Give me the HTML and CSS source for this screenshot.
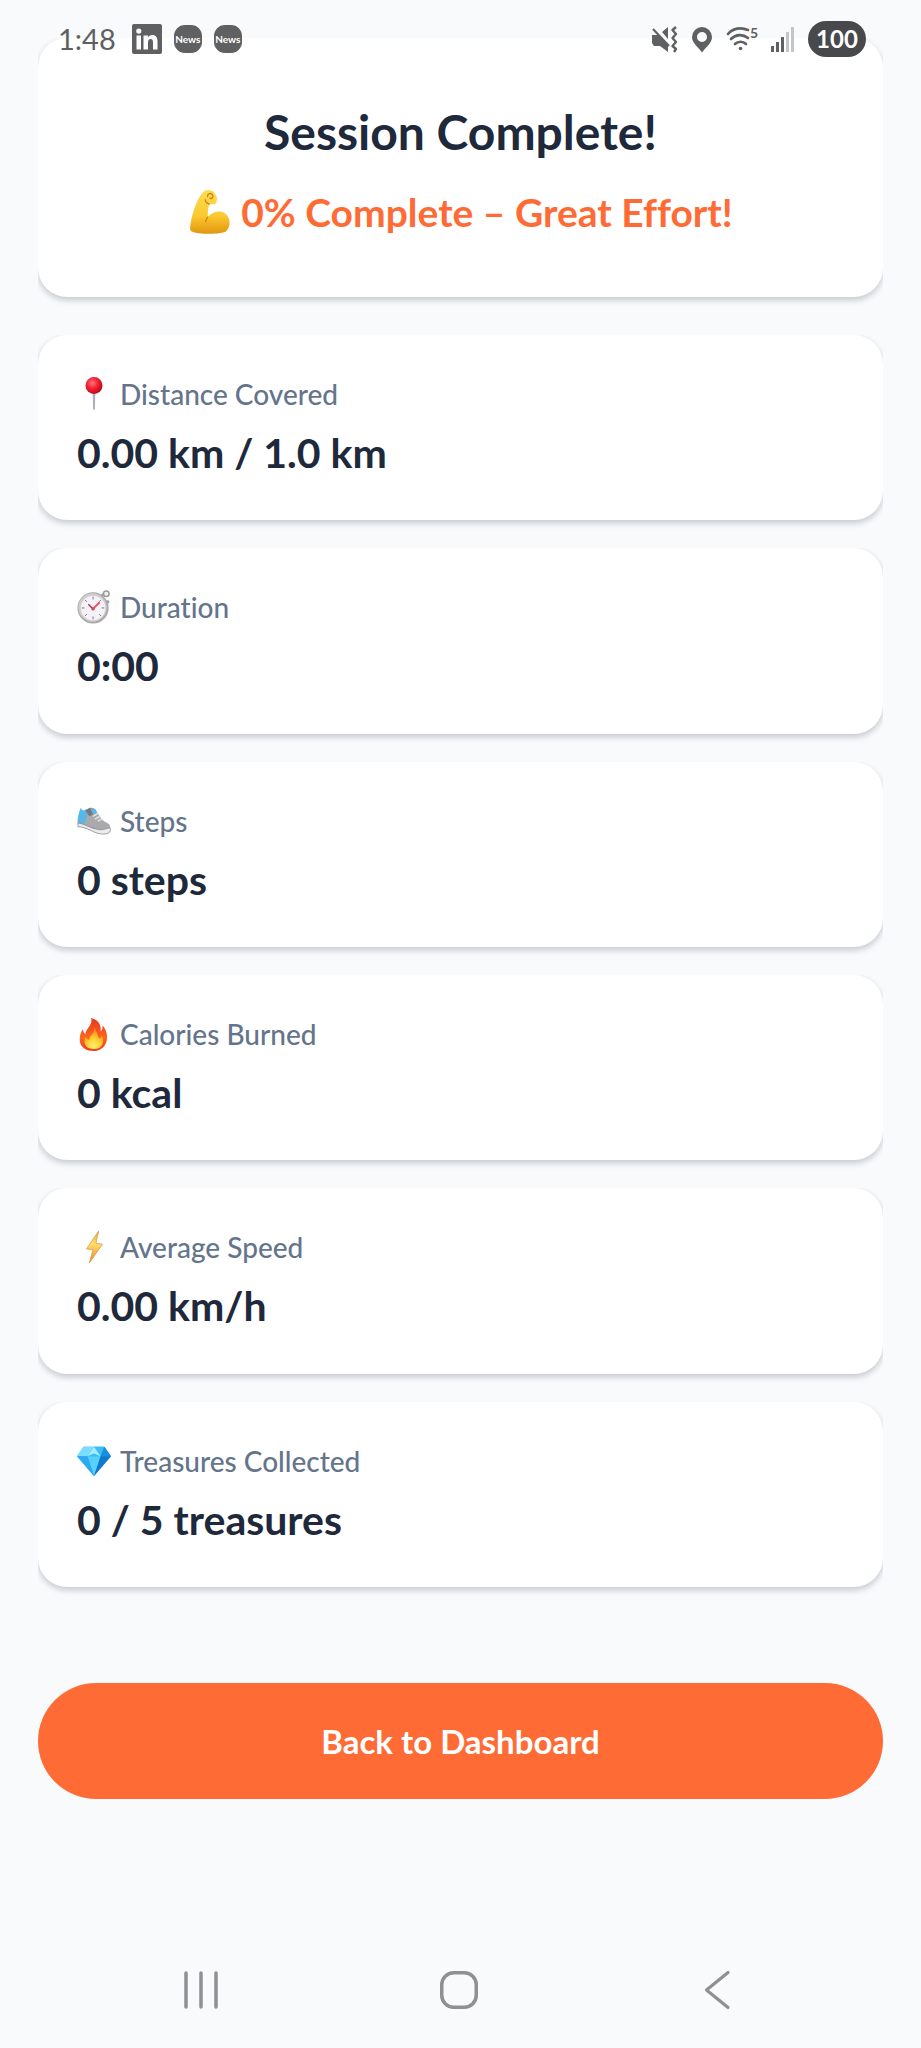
FILE: index.html
```html
<!DOCTYPE html>
<html lang="en">
<head>
<meta charset="utf-8">
<meta name="viewport" content="width=device-width, initial-scale=1">
<title>Session Complete</title>
<link rel="stylesheet" href="styles.css">
</head>
<body>
<div class="status-bar">
  <div class="status-left">
    <span class="clock">1:48</span>
    <svg class="app-icon" width="30" height="30" viewBox="0 0 30 30" role="img" aria-label="LinkedIn"><path fill="#5f6062" fill-rule="evenodd" d="M2 0h26a2 2 0 0 1 2 2v26a2 2 0 0 1-2 2H2a2 2 0 0 1-2-2V2a2 2 0 0 1 2-2zM4.500 11.500h4.500v14H4.500zM6.800 4.500a2.600 2.600 0 1 0 0 5.200 2.600 2.600 0 0 0 0-5.200zM11.500 11.500v14H16v-7c0-2 .7-3.500 2.600-3.500s2.400 1.600 2.400 3.500v7h4.500v-8c0-4-1.500-6.400-5.200-6.400-2.200 0-3.600 1-4.300 2.300v-1.900z"/></svg>
    <span class="news">News</span>
    <span class="news">News</span>
  </div>
  <div class="status-right">
    <svg width="27" height="27" viewBox="0 0 27 27" aria-hidden="true"><path fill="#5f6062" d="M1 9h7l9 9v8l-8-6H3l-2-3zM11 6l6-5v12z"/><path d="M2 3l16 17" stroke="#5f6062" stroke-width="2.200"/><path d="M25 1l-3.500 3 3.500 4-3.500 4 3.500 4-3.500 4 3.500 3-2 3" fill="none" stroke="#5f6062" stroke-width="2.400" stroke-linejoin="round"/></svg>
    <svg width="22" height="27" viewBox="0 0 22 27" aria-hidden="true"><path fill="#5f6062" fill-rule="evenodd" d="M11 1a10 10 0 0 1 10 10c0 6-6 10-10 15.500C7 21 1 17 1 11A10 10 0 0 1 11 1zm0 5a5 5 0 1 0 0 10 5 5 0 0 0 0-10z"/></svg>
    <span class="wifi"><svg width="24" height="26" viewBox="0 0 24 26" aria-hidden="true"><g fill="none" stroke="#5f6062" stroke-width="2.600" stroke-linecap="round"><path d="M2 8C7 2 15 1 22 4"/><path d="M5 13c5-5 12-5 17-1"/><path d="M9 18c3-3 8-3 11 0"/></g><circle cx="14.500" cy="22.500" r="1.800" fill="#5f6062"/></svg><span class="band">5</span></span>
    <svg width="24" height="26" viewBox="0 0 24 26" aria-hidden="true"><path fill="#5f6062" d="M0 20h3v6H0zM5 16h3v10H5zM10 11h3v15h-3z"/><path fill="#c4c5c7" d="M15 6h3v20h-3zM20 1h3v25h-3z"/></svg>
    <span class="battery">100</span>
  </div>
</div>

<main class="summary">
  <header class="card hero">
    <h1 class="title">Session Complete!</h1>
    <p class="result">
      <svg width="44" height="46" viewBox="0 0 36 36" preserveAspectRatio="none" aria-hidden="true"><defs><linearGradient id="arm" x1="0" y1="0" x2="0" y2="1"><stop offset="0" stop-color="#ffdc55"/><stop offset=".6" stop-color="#fbc82f"/><stop offset="1" stop-color="#e3950f"/></linearGradient></defs><path fill="url(#arm)" d="M13 2C15 0 20 .6 21.500 3c2 2 3 5 1.600 7.500-1.100 2-4 1.500-5.600 1.300-1 3.500-1.500 7-1.300 10.200 4-4.500 10-5.500 14-3 4.800 3 5 10.500 1.200 13.800-3 2.700-22 3-28.400.4-1.500-.6-1.500-3-1-5.200C3.500 18 8 6 13 2z"/><path d="M17.500 11.800c-2-.5-3.200-2-3.400-3.500M16 6c-.4-2 2-3.500 4-1.500 1.400 1.500-.8 4-2 2.500M16.200 22c-1 1.300-1.500 2.200-1.800 3.500" fill="none" stroke="#c98b12" stroke-width="1.100" stroke-linecap="round"/></svg>
      <span>0% Complete – Great Effort!</span>
    </p>
  </header>

  <dl class="stats">
    <div class="card stat">
      <dt class="label"><svg class="emoji" viewBox="0 0 36 36" aria-hidden="true"><defs><radialGradient id="pin" cx=".4" cy=".35" r=".65"><stop offset="0" stop-color="#ff7479"/><stop offset=".5" stop-color="#f32332"/><stop offset="1" stop-color="#bd0719"/></radialGradient></defs><path d="M16.500 16h3L19 33l-1 3-1-3z" fill="#c5c3cf"/><path d="M18 17v17" stroke="#8f8c9d" stroke-width=".8"/><circle cx="18" cy="9" r="9" fill="url(#pin)"/></svg>Distance Covered</dt>
      <dd class="value">0.00 km / 1.0 km</dd>
    </div>
    <div class="card stat">
      <dt class="label"><svg class="emoji" viewBox="0 0 36 36" aria-hidden="true"><path d="M25 7l4-3M31 12l3 1" stroke="#9a9899" stroke-width="3"/><circle cx="31" cy="4" r="3" fill="#eee" stroke="#9d9b9c" stroke-width="1.600"/><circle cx="17" cy="19" r="16.500" fill="#aaa8a8"/><circle cx="16.500" cy="18.500" r="15" fill="#d0cdcd"/><circle cx="17" cy="19" r="13" fill="#f4f2f8"/><path d="M17 7v3M17 28v3M5 19h3M26 19h3M8.500 10.500l2 2M23.500 25.500l2 2M25.500 10.500l-2 2M8.500 27.500l2-2" stroke="#77727b" stroke-width="1"/><path d="M17 20l7-7" stroke="#f04f5c" stroke-width="2"/><path d="M17 20l-5-5" stroke="#a83442" stroke-width="1.500"/><circle cx="17" cy="20" r="1.700" fill="#dc3f50"/></svg>Duration</dt>
      <dd class="value">0:00</dd>
    </div>
    <div class="card stat">
      <dt class="label"><svg class="emoji" viewBox="0 0 36 36" aria-hidden="true"><path fill="#aaa9ac" d="M3 7c2 2 5 2 7-1l3-2c3 0 6 0 7 3l6 9c3 4 9 4 9 8v6L1 23C0 18 2 12 3 7z"/><path fill="#59b6e9" d="M4 4c1 3 4 4 6 1l2 4-4 12-7-1C0 15 2 10 4 4zM15 4l5 2 2 6-5-2z"/><path fill="#77777c" d="M9 7l5-3 3 7-4 2z"/><path d="M17 13l5-3M19 16l5-3M22 18l4-2" stroke="#e5e5e8" stroke-width="1.500"/><path fill="#ececef" stroke="#85858a" stroke-width=".8" d="M1 20c8 1 13 6 21 7 5 1 9-1 13-2 1 3 0 5-2 6-6 2-13 0-18-3-5-2-9-4-14-4z"/></svg>Steps</dt>
      <dd class="value">0 steps</dd>
    </div>
    <div class="card stat">
      <dt class="label"><svg class="emoji" viewBox="0 0 36 36" aria-hidden="true"><defs><linearGradient id="flame" x1="0" y1="0" x2="0" y2="1"><stop offset="0" stop-color="#e83621"/><stop offset=".6" stop-color="#fc681d"/><stop offset="1" stop-color="#ee371d"/></linearGradient><radialGradient id="core" cx=".5" cy=".85" r=".75"><stop offset="0" stop-color="#fff36a"/><stop offset=".55" stop-color="#ffc52c"/><stop offset="1" stop-color="#ff8120"/></radialGradient></defs><path fill="url(#flame)" d="M15 1c8 2 11 8 10 14 2-1 2-3 2-6 8 8 7 26-9 27C2 36 0 23 6 13c1 3 1 4 3 5 0-6 8-9 6-17z"/><path fill="url(#core)" d="M18 11c4 5 3 9 6 12 1-1 2-2 2-4 4 7 1 15-8 15S6 28 9 21c1 2 2 3 4 3 0-5 6-6 5-13z"/></svg>Calories Burned</dt>
      <dd class="value">0 kcal</dd>
    </div>
    <div class="card stat">
      <dt class="label"><svg class="emoji" viewBox="0 0 36 36" aria-hidden="true"><defs><linearGradient id="bolt" x1="0" y1="0" x2="0" y2="1"><stop offset="0" stop-color="#f0a339"/><stop offset=".4" stop-color="#ffe06a"/><stop offset="1" stop-color="#e6812f"/></linearGradient></defs><path fill="url(#bolt)" stroke="#d99a45" stroke-width=".8" stroke-linejoin="round" d="M23 1L10 20l7 1-4 14 14-20-7-1z"/></svg>Average Speed</dt>
      <dd class="value">0.00 km/h</dd>
    </div>
    <div class="card stat">
      <dt class="label"><svg class="emoji" viewBox="0 0 36 36" aria-hidden="true"><path fill="#22a9ee" d="M7 3h22l7 10-18 21L0 13z"/><path fill="#7bdcff" d="M7 3h11l-7 10H0z"/><path fill="#3bbcf5" d="M18 3h11l-4 10H11z"/><path fill="#168fe1" d="M29 3l7 10H25z"/><path fill="#58d0ff" d="M11 13h14l-7 21z"/><path fill="#1379cf" d="M25 13h11L18 34z"/><path fill="#2caaf0" d="M0 13h11l7 21z"/><path fill="#a2edff" d="M18 3l7 10-7-3-7 3z"/></svg>Treasures Collected</dt>
      <dd class="value">0 / 5 treasures</dd>
    </div>
  </dl>

  <button class="back" type="button">Back to Dashboard</button>
</main>

<nav class="system-nav" aria-label="System">
  <button class="key" type="button" aria-label="Recent apps"><svg width="40" height="40" viewBox="0 0 40 40"><path d="M5 3v34M20 3v34M35 3v34" stroke="#8f9092" stroke-width="3.500" stroke-linecap="round"/></svg></button>
  <button class="key" type="button" aria-label="Home"><svg width="40" height="40" viewBox="0 0 40 40"><rect x="2.750" y="2.750" width="34.500" height="34.500" rx="12" fill="none" stroke="#8f9092" stroke-width="3.500"/></svg></button>
  <button class="key" type="button" aria-label="Back"><svg width="40" height="40" viewBox="0 0 40 40"><path d="M31 2.500L9.500 20 31 37.500" fill="none" stroke="#8f9092" stroke-width="3.200" stroke-linecap="round" stroke-linejoin="round"/></svg></button>
</nav>
</body>
</html>
```

FILE: styles.css
```css
* {
  box-sizing: border-box;
}

body {
  margin: 0;
  min-height: 100vh;
  display: flex;
  flex-direction: column;
  background: #f8fafc;
  color: #1e293b;
  font-family: Lato, "Open Sans", sans-serif;
  font-variant-ligatures: none;
}

svg {
  display: block;
  flex: none;
}

/* Overlays the scrolled content */
.status-bar {
  position: absolute;
  inset: 0 0 auto;
  z-index: 1;
  height: 78px;
  padding: 0 55px 0 58px;
  display: flex;
  align-items: center;
  justify-content: space-between;
  color: #5f6062;
}

.status-left,
.status-right {
  display: flex;
  align-items: center;
}

.status-left {
  gap: 12px;
}

.status-right {
  gap: 13px;
}

.clock {
  font-size: 29px;
  line-height: 36px;
  margin-right: 4px;
}

.news {
  width: 28px;
  height: 28px;
  border-radius: 11px;
  background: #5f6062;
  color: #fff;
  font-size: 10px;
  font-weight: 700;
  line-height: 28px;
  text-align: center;
}

.wifi {
  display: flex;
  align-items: flex-start;
}

.band {
  font-size: 14px;
  font-weight: 700;
  line-height: 14px;
}

.battery {
  width: 58px;
  height: 36px;
  border-radius: 18px;
  background: #48494b;
  color: #fff;
  font-size: 24px;
  font-weight: 700;
  line-height: 36px;
  text-align: center;
}

.summary {
  flex: 1;
  padding: 38px;
  display: flex;
  flex-direction: column;
}

.card {
  background: #fff;
  border-radius: 29px;
  box-shadow: 0 3px 6px rgba(15, 23, 42, 0.22);
  clip-path: inset(0 0 -14px 0);
}

.hero {
  padding: 64px 38px 57px;
  text-align: center;
}

.title {
  margin: 0 0 22px;
  font-size: 48px;
  line-height: 60px;
}

.result {
  margin: 0;
  display: flex;
  align-items: center;
  justify-content: center;
  gap: 9px;
  color: #ff6b35;
  font-size: 39px;
  font-weight: 700;
  line-height: 56px;
}

.stats {
  flex: 1;
  margin: 38px 0 0;
  display: grid;
  grid-auto-rows: 1fr;
  gap: 28px;
}

.stat {
  padding: 38px 39px;
}

.label {
  display: flex;
  align-items: center;
  gap: 9px;
  color: #64748b;
  font-size: 28px;
  font-weight: 500;
  line-height: 42px;
}

.emoji {
  width: 34px;
  height: 34px;
}

.value {
  margin: 8px 0 0;
  font-size: 41px;
  font-weight: 700;
  line-height: 59px;
}

.back {
  margin: 96px 0 0;
  padding: 30px;
  border: 0;
  border-radius: 58px;
  background: #ff6b35;
  color: #fff;
  font: 700 33px/56px Lato, "Open Sans", sans-serif;
}

.system-nav {
  display: flex;
  justify-content: center;
  gap: 178px;
  padding: 113px 4px 18px 0;
}

.key {
  width: 80px;
  height: 80px;
  padding: 0;
  border: 0;
  background: none;
  display: grid;
  place-items: center;
}
```
